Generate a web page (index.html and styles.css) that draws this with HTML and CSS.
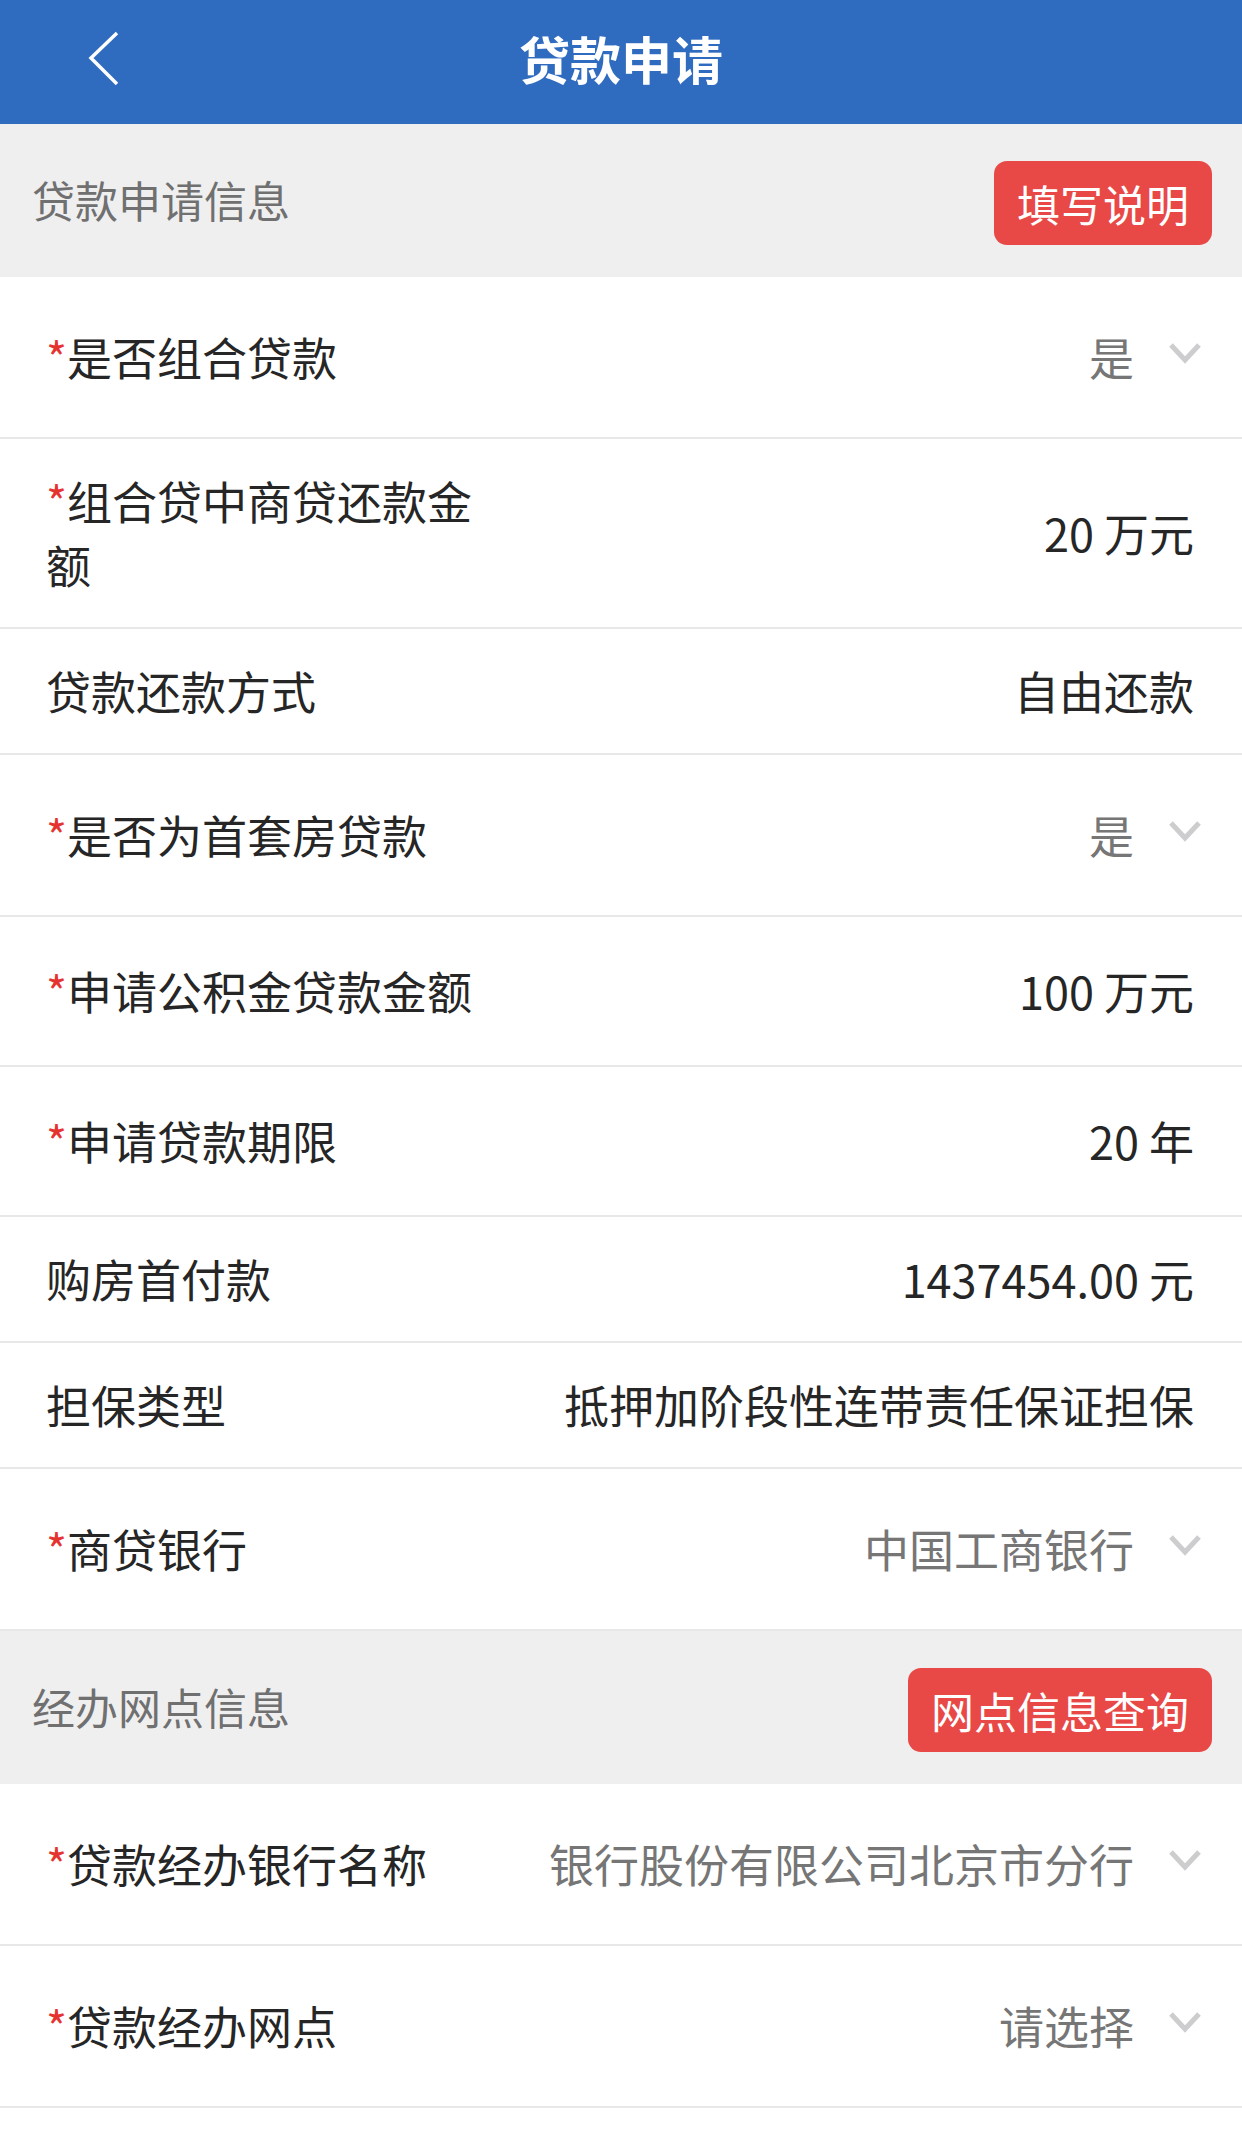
FILE: index.html
```html
<!DOCTYPE html>
<html>
<head>
  <meta charset="UTF-8" />
  <title>贷款申请</title>
  <link rel="stylesheet" href="styles.css">
</head>
<body>

<header class="nav-bar">
  <a class="nav-back">
    <svg width="32" height="56" viewBox="0 0 32 56"><path d="M29 2 L3 27 L29 53" fill="none" stroke="#fff" stroke-width="3.5"/></svg>
  </a>
  <h1 class="nav-title">贷款申请</h1>
  <span></span>
</header>

<div class="section-head">
  <span class="section-title">贷款申请信息</span>
  <button class="btn-red">填写说明</button>
</div>

<div class="form-list">
  <div class="row row-select">
    <div class="label req">是否组合贷款</div>
    <div class="value muted">是</div>
    <svg class="chev" width="34" height="22" viewBox="0 0 34 22"><path d="M3 3 L17 18 L31 3" fill="none" stroke="#cdcdcf" stroke-width="5"/></svg>
  </div>
  <div class="row row-input">
    <div class="label req">组合贷中商贷还款金额</div>
    <div class="value">20 万元</div>
  </div>
  <div class="row row-text">
    <div class="label">贷款还款方式</div>
    <div class="value">自由还款</div>
  </div>
  <div class="row row-select">
    <div class="label req">是否为首套房贷款</div>
    <div class="value muted">是</div>
    <svg class="chev" width="34" height="22" viewBox="0 0 34 22"><path d="M3 3 L17 18 L31 3" fill="none" stroke="#cdcdcf" stroke-width="5"/></svg>
  </div>
  <div class="row row-input">
    <div class="label req">申请公积金贷款金额</div>
    <div class="value">100 万元</div>
  </div>
  <div class="row row-input">
    <div class="label req">申请贷款期限</div>
    <div class="value">20 年</div>
  </div>
  <div class="row row-text">
    <div class="label">购房首付款</div>
    <div class="value">1437454.00 元</div>
  </div>
  <div class="row row-text">
    <div class="label">担保类型</div>
    <div class="value">抵押加阶段性连带责任保证担保</div>
  </div>
  <div class="row row-select">
    <div class="label req">商贷银行</div>
    <div class="value muted">中国工商银行</div>
    <svg class="chev" width="34" height="22" viewBox="0 0 34 22"><path d="M3 3 L17 18 L31 3" fill="none" stroke="#cdcdcf" stroke-width="5"/></svg>
  </div>
</div>

<div class="section-head">
  <span class="section-title">经办网点信息</span>
  <button class="btn-red">网点信息查询</button>
</div>

<div class="form-list">
  <div class="row row-select">
    <div class="label req">贷款经办银行名称</div>
    <div class="value muted">银行股份有限公司北京市分行</div>
    <svg class="chev" width="34" height="22" viewBox="0 0 34 22"><path d="M3 3 L17 18 L31 3" fill="none" stroke="#cdcdcf" stroke-width="5"/></svg>
  </div>
  <div class="row row-select">
    <div class="label req">贷款经办网点</div>
    <div class="value muted">请选择</div>
    <svg class="chev" width="34" height="22" viewBox="0 0 34 22"><path d="M3 3 L17 18 L31 3" fill="none" stroke="#cdcdcf" stroke-width="5"/></svg>
  </div>
</div>

</body>
</html>
```

FILE: styles.css
```css
body {
  margin: 0;
  background: #fff;
  font-family: "Noto Sans CJK SC", "Noto Sans", sans-serif;
  color: #262626;
}

.nav-bar {
  display: grid;
  grid-template-columns: 1fr auto 1fr;
  align-items: center;
  height: 124px;
  background: #2f6bbf;
}

.nav-back {
  display: flex;
  padding-left: 88px;
  margin-top: -6px;
}

.nav-title {
  margin: -8px 0 0;
  color: #fff;
  font-size: 51px;
  font-weight: 700;
  line-height: 1;
}

.section-head {
  display: flex;
  align-items: center;
  justify-content: space-between;
  height: 153px;
  padding: 0 30px 0 32px;
  background: #efeff0;
  box-sizing: border-box;
}

.section-title {
  font-size: 43px;
  color: #707070;
  margin-top: -4px;
}

.btn-red {
  height: 84px;
  padding: 0 23px;
  border: none;
  border-radius: 13px;
  background: #e84846;
  color: #fff;
  font-family: inherit;
  font-size: 43px;
  margin-top: 4px;
}

.row {
  display: flex;
  align-items: center;
  padding: 30px 48px 30px 46px;
  border-bottom: 2px solid #e8e8e8;
  box-sizing: border-box;
  font-size: 45px;
  line-height: 64px;
}

.row-select { min-height: 162px; }
.row-input { min-height: 150px; }
.row-text { min-height: 126px; }

.label {
  max-width: 450px;
  color: #262626;
}

.label.req::before {
  content: "*";
  color: #e5332f;
}

.value {
  margin-left: auto;
  color: #262626;
  white-space: nowrap;
}

.value.muted {
  color: #767676;
}

.chev {
  margin-left: 34px;
  margin-right: -8px;
  margin-top: -8px;
}
```
